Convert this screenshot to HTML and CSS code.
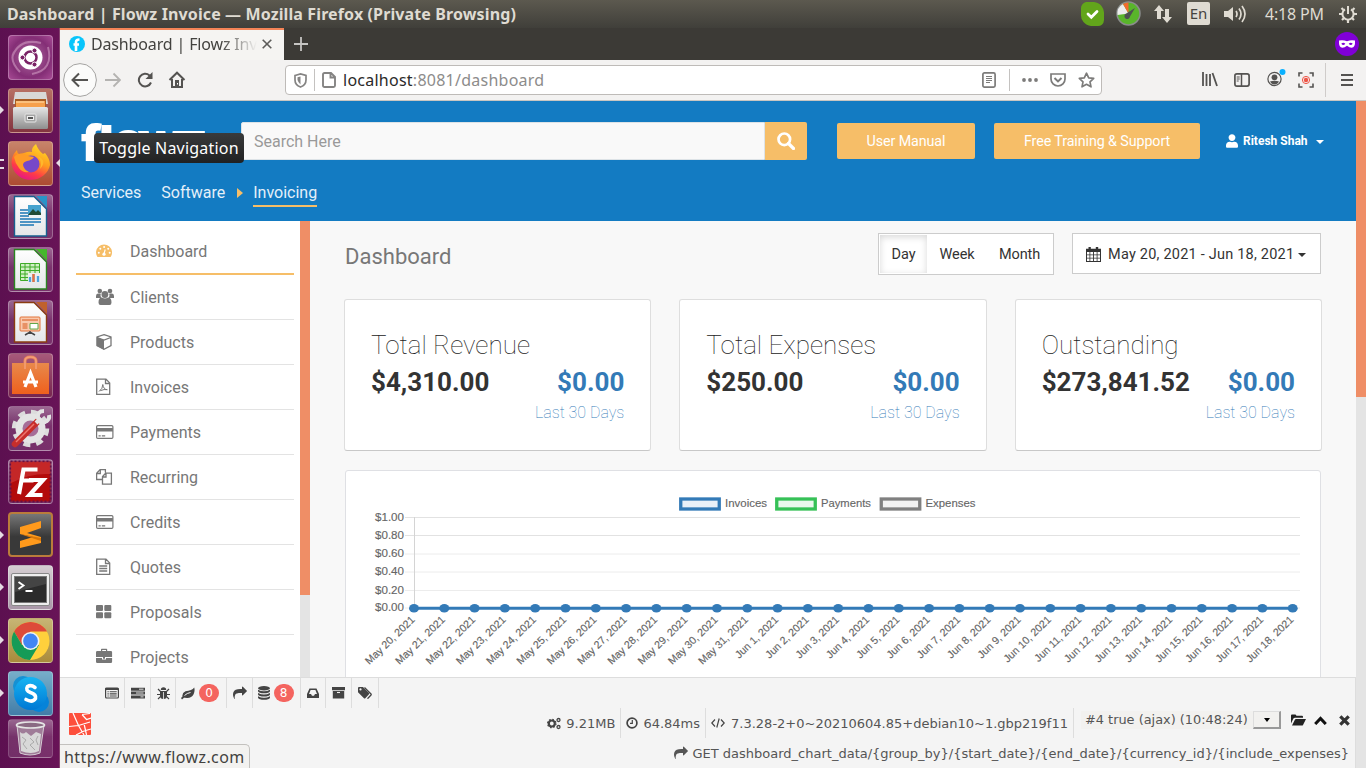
FILE: index.html
```html
<!DOCTYPE html>
<html lang="en">
<head>
<meta charset="utf-8">
<title>Dashboard | Flowz Invoice</title>
<link rel="stylesheet" href="styles.css">
</head>
<body>
<svg class="defs" width="0" height="0">
  <defs>
    <symbol id="i-share" viewBox="0 0 1792 1792"><path fill="currentColor" d="M1792 640q0 26-19 45l-512 512q-19 19-45 19t-45-19-19-45v-256h-224q-98 0-175.5 6t-154 21.5-133 42.5-105.5 69.5-80 101-48.5 138.5-17.5 181q0 55 5 123 0 6 2.5 23.5t2.5 26.5q0 15-8.5 25t-23.5 10q-16 0-28-17-7-9-13-22t-13.5-30-10.5-24q-127-285-127-451 0-199 53-333 162-403 875-403h224v-256q0-26 19-45t45-19 45 19l512 512q19 19 19 45z"/></symbol>
    <symbol id="i-card" viewBox="0 0 18 18"><rect x=".6" y="2.6" width="16.3" height="12.8" rx="1.2" fill="none" stroke="currentColor" stroke-width="1.2"/><path fill="currentColor" d="M.6 5h16.3v3.5H.6zM2.5 12.2h2.2v1.2H2.5zM5.8 12.2h3.4v1.2H5.8z"/></symbol>
    <linearGradient id="g-sheet" x1="0" y1="0" x2="0" y2="1"><stop offset="0" stop-color="#fff"/><stop offset="1" stop-color="#e4e6e8"/></linearGradient>
    <linearGradient id="g-fox" x1=".8" y1="0" x2=".3" y2="1"><stop offset="0" stop-color="#ffe226"/><stop offset=".45" stop-color="#ff9a1f"/><stop offset=".75" stop-color="#ff3b47"/><stop offset="1" stop-color="#e31587"/></linearGradient>
    <linearGradient id="g-metal" x1="0" y1="0" x2="0" y2="1"><stop offset="0" stop-color="#e6e6e6"/><stop offset="1" stop-color="#8e8e8e"/></linearGradient>
    <linearGradient id="g-bag" x1="0" y1="0" x2="0" y2="1"><stop offset="0" stop-color="#e8894b"/><stop offset="1" stop-color="#ef601d"/></linearGradient>
    <linearGradient id="g-sky" x1="0" y1="0" x2="0" y2="1"><stop offset="0" stop-color="#16b4f2"/><stop offset="1" stop-color="#0078d4"/></linearGradient>
  </defs>
</svg>

<div class="desktop">
  <header class="panel">
    <div class="panel-title">Dashboard | Flowz Invoice — Mozilla Firefox (Private Browsing)</div>
    <div class="panel-tray">
      <svg class="t-check" width="25" height="26" viewBox="0 0 25 26"><path fill="#62a51b" d="M6 1h8a11 11 0 0 1 10 12v6a6 6 0 0 1-7 6h-6A11 11 0 0 1 1 13V8a7 7 0 0 1 5-7z"/><path d="m8 13 3.300 3.200L17 10.500" fill="none" stroke="#fff" stroke-width="2.800" stroke-linecap="round"/></svg>
      <svg class="t-gauge" width="25" height="25" viewBox="0 0 25 25"><circle cx="12.500" cy="12.500" r="11.500" fill="#59b52b" stroke="#8a8d8c" stroke-width="1.500"/><path fill="#ececec" d="M12.500 12.500 1.500 14A11 11 0 0 1 7 3z"/><path fill="#f26a2e" d="M12.500 12.500 7 3a11 11 0 0 1 5.500-1.500z"/><path fill="#4c5250" d="M9.500 13 19 7l-5 8.500a2.800 2.800 0 1 1-4.500-2.500z"/></svg>
      <svg class="t-net" width="18" height="18" viewBox="0 0 18 18"><path fill="#dfdbd2" d="m5 0 5 6H7v8H3V6H0zM13 18l-5-6h3V4h4v8h3z"/></svg>
      <span class="t-lang">En</span>
      <svg class="t-vol" width="23" height="20" viewBox="0 0 23 20"><path fill="#dfdbd2" d="M0 7h4l5-4v14l-5-4H0z"/><path d="M12 7q2 3 0 6M15 4.500q4 5.500 0 11M18 2q6 8 0 16" fill="none" stroke="#dfdbd2" stroke-width="1.700"/></svg>
      <span class="t-time">4:18 PM</span>
      <svg class="t-gear" width="18" height="18" viewBox="0 0 18 18"><g fill="none" stroke="#dfdbd2"><path d="M6 4.300a5.600 5.600 0 1 0 6 0" stroke-width="2"/><path d="M9 1v8" stroke-width="2"/><path d="m2.500 3 2 2M15.500 3l-2 2M0 9h3.500M14.500 9H18M3 15l2-2M15 15l-2-2M9 14.500V18" stroke-width="2.200"/></g></svg>
    </div>
  </header>

  <div class="workspace">
    <aside class="launcher">
      <div class="tile dash"><svg viewBox="0 0 45 45"><path d="M5 20Q12 3 33 8M40 12q6 23-16 27M12 37Q1 26 6 17" fill="none" stroke="#c68bb8" stroke-width="2" opacity=".7"/><circle cx="22.500" cy="22.500" r="12" fill="#fff"/><circle cx="22.500" cy="22.500" r="6" fill="none" stroke="#7a2266" stroke-width="2.500"/><g fill="#7a2266" stroke="#fff"><circle cx="14.500" cy="22.500" r="2.500"/><circle cx="26.500" cy="15.500" r="2.500"/><circle cx="26.500" cy="29.500" r="2.500"/></g></svg></div>
      <div class="tile files run"><svg viewBox="0 0 45 45"><path fill="#d8d8d6" d="M7 4h31l2 12H5z"/><path fill="#a85c22" d="M7 11h31v8H7z"/><path fill="#f6a04c" d="M8 13h29v6H8z"/><path d="M8 14h28" stroke="#ffe0ad"/><rect x="5" y="19" width="35" height="22" rx="1.500" fill="url(#g-metal)"/><rect x="17" y="26" width="11" height="8" rx="1" fill="#a3a3a3" stroke="#e5e5e5"/><rect x="19.500" y="28.500" width="6" height="3" fill="#555" stroke="#eee"/></svg></div>
      <div class="tile fox run active"><svg viewBox="0 0 45 45"><path fill="url(#g-fox)" d="M28 3q2 6 7 10l2-1q5 6 5 12a19.500 18.500 0 0 1-38 1Q2 16 9 9q0 3 2 4l5-1q5-2 8-1-1-4 4-8z"/><circle cx="23" cy="23" r="8.500" fill="#7748c9"/><path fill="#ff9b26" d="M6 16q5-6 14-1l6 1q-2 3-7 4-4 1-4 4 1 5 6 7-7 1-10-4-4-5-5-11z"/><path fill="#ffb82b" d="M29 15q6 5 3 13 8-9-3-13z"/></svg></div>
      <div class="tile doc"><svg viewBox="0 0 45 45"><path fill="url(#g-sheet)" stroke="#17608f" stroke-width="1.400" d="M6.500 2.500H26L38.500 15v27h-32z"/><path fill="#2a93c8" d="M28 2h11v12z"/><path d="M12 16h9M12 19h9M12 22h9M12 25h21M12 28h21M12 31h14" stroke="#1a77b5" stroke-width="1.500"/><rect x="20" y="11" width="13" height="10" fill="#46a3cf"/><path fill="#234b34" d="m20 21 5-6 3 3 2-2 3 3v2z"/></svg></div>
      <div class="tile doc"><svg viewBox="0 0 45 45"><path fill="url(#g-sheet)" stroke="#2a8520" stroke-width="1.400" d="M6.500 2.500H26L38.500 15v27h-32z"/><path fill="#45b82c" d="M28 2h11v12z"/><path fill="#d1f0c6" stroke="#3eab28" d="M12.500 16.500h19v17h-19zM12.500 20h19M12.500 23.500h19M12.500 27h19M12.500 30.500h19M17 16.500v17M22 16.500v17M27 16.500v17"/><rect x="20" y="26" width="13" height="9" fill="#eee"/><path d="M22 35v-5M25.500 35v-8M30 35v-6" stroke="#4da2dc" stroke-width="2.300"/><path d="M25.500 35v-8" stroke="#ef713b" stroke-width="2.300"/></svg></div>
      <div class="tile doc"><svg viewBox="0 0 45 45"><path fill="url(#g-sheet)" stroke="#8a3d10" stroke-width="1.400" d="M6.500 2.500H26L38.500 15v27h-32z"/><path fill="#c0612c" d="M28 2h11v12z"/><rect x="12" y="17" width="20" height="14" rx="1" fill="#f9c9ad" stroke="#e3753a"/><path d="M14 20h16M14.500 24h5M14.500 26h5M14.500 28h5" stroke="#d75a1e"/><path fill="#fff" stroke="#63a84a" d="M22 23.500h8V29h-8z"/><path d="m17 35 5-3 5 3M22 31v3" fill="none" stroke="#444" stroke-width="1.500"/></svg></div>
      <div class="tile bag"><svg viewBox="0 0 45 45"><path d="M17 16V8q0-4 5.500-4T28 8v8" fill="none" stroke="#e9815a" stroke-width="3"/><path fill="url(#g-bag)" d="M4 10h37v31H4z"/><path d="M17 16V8q0-4 5.500-4T28 8v8" fill="none" stroke="#f3a078" stroke-width="1.500"/><path d="m17 34 5.500-14L28 34M15 29h15" fill="none" stroke="#fff" stroke-width="3.200"/></svg></div>
      <div class="tile tools"><svg viewBox="0 0 45 45"><circle cx="22.500" cy="22.500" r="16.500" fill="none" stroke="#dcdcdc" stroke-width="4.500" stroke-dasharray="7 5.960"/><circle cx="22.500" cy="22.500" r="11.500" fill="#a66d97" stroke="#e4e4e4" stroke-width="7"/><path d="M7 38 29 16" stroke="#c72e2b" stroke-width="6.500" stroke-linecap="round"/><path d="m8 36 18-18" stroke="#ee7770" stroke-width="1.500"/><path d="m28 17 5-5M36 5q-7 0-6 7 1 6 7 4 5-2 4-7" fill="none" stroke="#e4e4e4" stroke-width="4"/></svg></div>
      <div class="tile fz"><svg viewBox="0 0 45 45"><rect x="2.500" y="2.500" width="40" height="40" fill="#b30b0b" stroke="#651044" stroke-width="2" stroke-dasharray="2 2"/><path fill="#cf3a3a" opacity=".6" d="M3 3h39v12Q22 14 3 24z"/><path d="M11 35 15.500 10.500h14M13.500 21.500h12M21 21h14L21.500 36h13" fill="none" stroke="#fff" stroke-width="4.200"/></svg></div>
      <div class="tile sublime run"><svg viewBox="0 0 45 45"><path fill="#ff9a1c" d="m12 15 21-6v7l-14 5 14 4v6l-21 5v-7l13-4-13-3z"/><path fill="#d97708" d="m12 22 21 4v3l-12-4z"/></svg></div>
      <div class="tile term run"><svg viewBox="0 0 45 45"><rect x="3.500" y="8.500" width="38" height="32" rx="1.500" fill="#eee" stroke="#888"/><rect x="6.500" y="11.500" width="32" height="26" fill="#2b2b2b" stroke="#777"/><path fill="#555" opacity=".6" d="M7 12h31v7L7 27z"/><path d="m10.500 17 5 3.500-5 3.500M17.500 26h7" fill="none" stroke="#fff" stroke-width="1.900"/></svg></div>
      <div class="tile chrome run"><svg viewBox="0 0 45 45"><circle cx="22.500" cy="23" r="19" fill="#ffd03c"/><path fill="#dd4b39" d="M6.100 13.500A19 19 0 0 1 39 13.500H22.500L14 27z"/><path fill="#159b57" d="M6.100 13.500A19 19 0 0 0 22 42l9-15H14z"/><circle cx="22.500" cy="23" r="9" fill="#f1f1f1"/><circle cx="22.500" cy="23" r="7.400" fill="#4285f4"/></svg></div>
      <div class="tile skype run"><svg viewBox="0 0 45 45"><circle cx="15" cy="15" r="10" fill="#1591d4"/><circle cx="31" cy="31" r="10" fill="#0583d9"/><circle cx="22.500" cy="22.500" r="16.500" fill="url(#g-sky)"/><path d="M27 16.500q-4-3-7.500-1-2.500 4 3 6 6 2 5 6-3 4.500-9.500 1" fill="none" stroke="#fff" stroke-width="3.600" stroke-linecap="round"/></svg></div>
      <div class="tile trash"><svg viewBox="0 0 45 40"><path d="m9 6 3 28q10 4 20 0L36 6" fill="#9f7c98" stroke="#d6ccd4" stroke-width="1"/><path d="M12 13q3 3 6 0l5 4 5-4 5 2-2 17q-8 4-18 0z" fill="#d8d8d8"/><path d="m14 18 4 3-3 4 4 5M22 19l4 4-4 3 5 5M30 17l-2 4 2 5" fill="none" stroke="#aaa"/><ellipse cx="22.500" cy="6" rx="14" ry="3" fill="#8a6a83" stroke="#e6e6e6" stroke-width="1.600"/></svg></div>
    </aside>

    <main class="browser">
      <div class="tabs">
        <div class="tab">
          <svg width="16" height="16" viewBox="0 0 16 16"><circle cx="8" cy="8" r="8" fill="#09c5fb"/><path d="M7 15V6q0-2.500 3.500-2.500M4.500 8.500H10" fill="none" stroke="#fff" stroke-width="2.600"/></svg>
          <span class="tab-title">Dashboard | Flowz Inv</span>
          <svg width="10" height="10" viewBox="0 0 10 10"><path d="m.7.7 8.600 8.600M9.300.7.700 9.300" stroke="#5c5b59" stroke-width="1.600"/></svg>
        </div>
        <svg class="tab-new" width="14" height="14" viewBox="0 0 14 14"><path d="M7 0v14M0 7h14" stroke="#c6c5c3" stroke-width="1.800"/></svg>
        <svg class="tab-mask" width="24" height="24" viewBox="0 0 24 24"><circle cx="12" cy="12" r="12" fill="#8000d7"/><path fill="#fff" fill-rule="evenodd" d="M4 8.500q4-1 8 .7 4-1.700 8-.7.500 7-3.500 7.200-2 0-4.500-2-2.500 2-4.500 2Q3.500 15.500 4 8.500zm2.300 3.200q2 2.400 4 0-2-1.700-4 0zm7.400 0q2 2.400 4 0-2-1.700-4 0z"/></svg>
      </div>

      <div class="toolbar">
        <svg class="nav-back" width="34" height="34" viewBox="0 0 34 34"><circle cx="17" cy="17" r="16.400" fill="#fbfbfa" stroke="#a4a3a1" stroke-width="1"/><path d="M25 17H10M16 10.500 9.500 17l6.500 6.500" fill="none" stroke="#545351" stroke-width="2"/></svg>
        <svg class="nav-fwd" width="16" height="16" viewBox="0 0 16 16"><path d="M0 8h15M8.500 1.500 15 8l-6.500 6.500" fill="none" stroke="#b4b3b1" stroke-width="1.800"/></svg>
        <svg class="nav-reload" width="16" height="16" viewBox="0 0 16 16"><path d="M14 10.500A6.300 6.300 0 1 1 12.500 3.500L14.500 6" fill="none" stroke="#545351" stroke-width="2"/><path fill="#545351" d="M15.500 0v7h-7z"/></svg>
        <svg class="nav-home" width="18" height="17" viewBox="0 0 18 17"><path d="M1.500 9 9 1.700 16.500 9M4 8v8h10V8" fill="none" stroke="#545351" stroke-width="2"/><path fill="#545351" d="M7 9h4v7H7z"/><path d="M9.500 12v1.500" stroke="#fff"/></svg>
        <div class="urlbar">
          <svg width="13" height="15" viewBox="0 0 13 15"><path d="M1 2.500 6.500 1 12 2.500V7q0 5-5.500 7Q1 12 1 7z" fill="none" stroke="#858483" stroke-width="1.700"/><path fill="#858483" d="M6.500 3.500v8Q4 9 3.500 7V4.300z"/></svg>
          <i class="url-sep"></i>
          <svg width="14" height="16" viewBox="0 0 14 16"><path d="M2.500 1H9l4 4v8.500q0 1.500-1.500 1.500h-9Q1 15 1 13.500v-11Q1 1 2.500 1zM8.500 1v4.500H13" fill="none" stroke="#858483" stroke-width="1.900"/></svg>
          <span class="url"><b>localhost</b>:8081/dashboard</span>
          <svg class="u-read" width="14" height="16" viewBox="0 0 14 16"><rect x=".9" y=".9" width="12.200" height="14.200" rx="1.500" fill="none" stroke="#7c7b7a" stroke-width="1.700"/><path d="M4 4.500h6M4 6.500h6M4 8.500h6M4 10.500h4" stroke="#7c7b7a" stroke-width="1"/></svg>
          <i class="url-sep u-sep2"></i>
          <svg class="u-dots" width="16" height="4" viewBox="0 0 16 4"><g fill="#7c7b7a"><circle cx="2" cy="2" r="1.900"/><circle cx="8" cy="2" r="1.900"/><circle cx="14" cy="2" r="1.900"/></g></svg>
          <svg class="u-pocket" width="16" height="14" viewBox="0 0 16 14"><path d="M1 1h14v5a7 7 0 0 1-14 0z" fill="none" stroke="#7c7b7a" stroke-width="1.700"/><path d="m4.500 5 3.500 3.400L11.500 5" fill="none" stroke="#7c7b7a" stroke-width="2"/></svg>
          <svg width="17" height="16" viewBox="0 0 17 16"><path d="m8.500 1.200 2.200 4.600 5 .6-3.700 3.400 1 5-4.500-2.500L4 14.800l1-5-3.700-3.400 5-.6z" fill="none" stroke="#7c7b7a" stroke-width="1.700" stroke-linejoin="round"/></svg>
        </div>
        <svg class="n-lib" width="16" height="15" viewBox="0 0 16 15"><path d="M1 0v14M4.500 2v12M8 2v12" stroke="#545351" stroke-width="1.800"/><path d="m10.500 1 4.500 13" stroke="#545351" stroke-width="1.800"/></svg>
        <svg class="n-side" width="16" height="14" viewBox="0 0 16 14"><rect x=".9" y=".9" width="14.200" height="12.200" rx="2" fill="none" stroke="#545351" stroke-width="1.700"/><path d="M7.500 1v12" stroke="#545351" stroke-width="1.500"/><path d="M2.700 4h3M2.700 6h3M2.700 8h2" stroke="#545351"/></svg>
        <svg class="n-acct" width="19" height="18" viewBox="0 0 19 18"><circle cx="7.500" cy="10" r="6.600" fill="none" stroke="#545351" stroke-width="1.200"/><circle cx="7.500" cy="8.300" r="2.900" fill="#545351"/><path fill="#545351" d="M3 12.500q2-.8 4.500-.8t4.500.8q-1.500 3-4.500 3t-4.500-3z"/><circle cx="15.500" cy="3" r="3" fill="#0ab1ff"/></svg>
        <svg class="n-shot" width="16" height="16" viewBox="0 0 16 16"><path d="M1 4.500V1h3.500M11.500 1H15v3.500M15 11.500V15h-3.500M4.500 15H1v-3.500" fill="none" stroke="#545351" stroke-width="1.600"/><circle cx="8" cy="8" r="3.600" fill="none" stroke="#ee5547" stroke-width="1"/><circle cx="8" cy="8" r="2.200" fill="#ee5547"/></svg>
        <i class="bar-sep"></i>
        <svg class="n-menu" width="12" height="12" viewBox="0 0 12 12"><path d="M0 1h12M0 6h12M0 11h12" stroke="#545351" stroke-width="2"/></svg>
      </div>

      <div class="page">
        <div class="page-main">
          <div class="site-head">
            <div class="head-row">
              <div class="logo"><span>fl</span><span class="logo-low">owz</span></div>
              <div class="search"><span class="search-box">Search Here</span><span class="search-btn"><svg width="18" height="18" viewBox="0 0 18 18"><circle cx="7.300" cy="7.300" r="5.800" fill="none" stroke="#fff" stroke-width="2.700"/><path d="m11.500 11.500 5 5" stroke="#fff" stroke-width="3.200" stroke-linecap="round"/></svg></span></div>
              <a class="btn btn-manual">User Manual</a>
              <a class="btn btn-train">Free Training &amp; Support</a>
              <div class="user"><svg width="12" height="14" viewBox="0 0 448 512"><path fill="#fff" d="M224 256c70.700 0 128-57.300 128-128S294.700 0 224 0 96 57.300 96 128s57.300 128 128 128zm89.600 32h-16.700c-22.200 10.200-46.900 16-72.900 16s-50.600-5.800-72.900-16h-16.700C60.200 288 0 348.200 0 422.400V464c0 26.500 21.500 48 48 48h352c26.500 0 48-21.500 48-48v-41.600c0-74.200-60.200-134.400-134.400-134.400z"/></svg><span>Ritesh Shah</span><i class="caret"></i></div>
            </div>
            <nav class="crumbs"><a>Services</a><a>Software</a><i class="crumb-arrow"></i><a class="current">Invoicing</a></nav>
            <div class="tooltip">Toggle Navigation</div>
          </div>

          <div class="columns">
            <nav class="side">
              <a class="on"><svg viewBox="0 0 18 18"><path fill="currentColor" d="M1.500 15A8 8 0 1 1 14.600 15z"/><g fill="#fff"><circle cx="2.800" cy="10.700" r="1"/><circle cx="4.300" cy="6.800" r="1"/><circle cx="8.100" cy="5" r="1"/><circle cx="12.200" cy="6.800" r="1"/><circle cx="13.700" cy="10.700" r="1"/><circle cx="8" cy="12.200" r="1.600"/></g><path d="m8 12 1.200-4.500" stroke="#fff" stroke-width="1.100"/></svg>Dashboard</a>
              <a><svg viewBox="0 0 18 18"><g fill="currentColor"><circle cx="3.800" cy="3" r="2.300"/><circle cx="14" cy="3" r="2.300"/><path d="M0 10V8q0-2.500 2-2.500h2.500q.5 1 0 2 .3 1.500 1 2.500zM18 10V8q0-2.500-2-2.500h-2.500q-.5 1 0 2-.3 1.500-1 2.500z"/><circle cx="8.900" cy="6.500" r="3.400"/><path d="M2.500 14.500q0-5 3.500-5 3 2 6 0 3.500 0 3.500 5 0 2.500-2 2.500h-9q-2 0-2-2.500z"/></g></svg>Clients</a>
              <a><svg viewBox="0 0 18 18"><path d="M8 1.700 15 4v8.500l-7 3.800-7-3.800V4zM1.200 4.500 8 7l6.800-2.500" fill="none" stroke="currentColor" stroke-width="1.300"/><path fill="currentColor" d="M.7 4.300 8 7v9.800l-7.300-4z"/></svg>Products</a>
              <a><svg viewBox="0 0 18 18"><path d="M.7 1.200H10l3.700 3.700v11.400H.7zM9.500 1.500v4h4" fill="none" stroke="currentColor" stroke-width="1.300"/><path d="M3 13.500q4-3 3.800-7 .7 5 4.500 5.200-3-.8-7 1" fill="none" stroke="currentColor" stroke-width="1"/></svg>Invoices</a>
              <a><svg><use href="#i-card"/></svg>Payments</a>
              <a><svg viewBox="0 0 18 18"><path fill="none" stroke="currentColor" stroke-width="1.300" d="M6.500 11.500H.6V5.300l3.500-3.700h5.300v3M4.300 2v3.500H.8M9.700 5.200h5.700v11H6.500V8.500zM10 5.500V9H6.700"/></svg>Recurring</a>
              <a><svg><use href="#i-card"/></svg>Credits</a>
              <a><svg viewBox="0 0 18 18"><path d="M.7 1.200H10l3.700 3.700v11.400H.7zM9.500 1.500v4h4M3.200 8h8M3.200 10.500h8M3.200 13h8" fill="none" stroke="currentColor" stroke-width="1.300"/></svg>Quotes</a>
              <a><svg viewBox="0 0 18 18"><g fill="currentColor"><rect y="2" width="7" height="6" rx="1"/><rect x="8.300" y="2" width="7" height="6" rx="1"/><rect y="9.200" width="7" height="6" rx="1"/><rect x="8.300" y="9.200" width="7" height="6" rx="1"/></g></svg>Proposals</a>
              <a><svg viewBox="0 0 18 18"><path fill="currentColor" d="M5 3V1.500Q5 .8 5.700.8h4.800q.7 0 .7.700V3h3.600q1.300 0 1.300 1.300V9H0V4.300Q0 3 1.300 3zm1.200 0H10V2H6.200zM0 10h6v1.500h4V10h6.100v3.700q0 1.300-1.300 1.300H1.300Q0 15 0 13.700zM7 9h2v1.700H7z"/></svg>Projects</a>
            </nav>
            <div class="scroll side-scroll"><i></i></div>

            <section class="content">
              <div class="content-head">
                <h1>Dashboard</h1>
                <div class="group"><span class="pressed">Day</span><span class="week">Week</span><span class="month">Month</span></div>
                <div class="range"><svg width="15" height="15" viewBox="0 0 15 15"><path fill="#333" d="M2.500 0h2.300v1.800h5V0h2.400v1.800H15V15H0V1.800h2.500z"/><path fill="#fff" d="M1 5h2.500v2.400H1zM4.300 5h2.800v2.400H4.300zM8 5h2.700v2.400H8zM11.500 5H14v2.400h-2.500zM1 8.200h2.500v2.500H1zM4.300 8.200h2.800v2.500H4.300zM8 8.200h2.700v2.500H8zM11.500 8.200H14v2.500h-2.500zM1 11.500h2.500V14H1zM4.300 11.500h2.800V14H4.300zM8 11.500h2.700V14H8zM11.500 11.500H14V14h-2.500z"/></svg><span>May 20, 2021 - Jun 18, 2021</span><i class="caret dark"></i></div>
              </div>
              <div class="cards">
                <article><h2>Total Revenue</h2><div class="nums"><b>$4,310.00</b><b class="blue">$0.00</b></div><p>Last 30 Days</p></article>
                <article><h2>Total Expenses</h2><div class="nums"><b>$250.00</b><b class="blue">$0.00</b></div><p>Last 30 Days</p></article>
                <article><h2>Outstanding</h2><div class="nums"><b>$273,841.52</b><b class="blue">$0.00</b></div><p>Last 30 Days</p></article>
              </div>
              <div class="chart-card"><svg id="chart" width="974" height="206" viewBox="346 471 974 206"></svg></div>
            </section>
          </div>

          <div class="debugbar">
            <div class="db-tabs">
              <span class="d1"><svg width="14" height="14" viewBox="0 0 14 14"><rect x=".6" y="2" width="12.800" height="10" rx="1" fill="none" stroke="#444" stroke-width="1.200"/><path fill="#444" d="M.6 2h12.800v2H.6z"/><path d="M2.500 5.800h1.200M4.700 5.800h7M2.500 7.900h1.200M4.700 7.900h7M2.500 10h1.200M4.700 10h7" stroke="#444" stroke-width="1.100"/></svg></span>
              <span class="d2"><svg width="14" height="14" viewBox="0 0 14 14"><path d="M0 3.200h14M0 7h14M0 10.900h14" stroke="#444" stroke-width="3"/><path d="M8 3.200h4.500M5 7h7.500M9.500 10.900h3" stroke="#ddd" stroke-width="1"/></svg></span>
              <span class="d3"><svg width="13" height="13" viewBox="0 0 13 13"><path fill="#444" d="M3.800 3a2.700 2.700 0 0 1 5.400 0zM3 4h7v4.500q0 3.500-3.500 3.500T3 8.500z"/><path d="m1 2 2.500 2.500M12 2 9.500 4.500M0 7.500h3M10 7.500h3M1 12l2.700-2.700M12 12 9.300 9.300" stroke="#444" stroke-width="1.200"/><path d="M6.500 5v7" stroke="#f4f4f4" stroke-width=".8"/></svg></span>
              <span class="d4"><svg width="14" height="13" viewBox="0 0 14 13"><path fill="#444" d="M13.200.5q1 3-.6 6.700-2.200 4-6.600 3.800-2-.4-3-.2L1 12.500 0 11l1.500-1.500Q.8 6 4.500 4.200 11 3.600 13.200.5z"/><path d="M3.500 8.500Q6 6 9.500 5.500" fill="none" stroke="#f4f4f4"/></svg><em>0</em></span>
              <span class="d5"><svg width="14" height="14"><use href="#i-share"/></svg></span>
              <span class="d6"><svg width="12" height="14" viewBox="0 0 12 14"><g fill="#444"><ellipse cx="6" cy="2.300" rx="6" ry="2.200"/><path d="M0 3.800q6 3 12 0v1.500q-1 2-6 2t-6-2zM0 7q6 3 12 0v1.500q-1 2-6 2t-6-2zM0 10.200q6 3 12 0v1.500q-1 2-6 2t-6-2z"/></g></svg><em>8</em></span>
              <span class="d7"><svg width="12" height="12" viewBox="0 0 12 12"><path fill="#444" fill-rule="evenodd" d="M2.500 1.500h7L12 7v4H0V7zM3.600 3 2 7h2l1 1.700h2L8 7h2L8.400 3z"/></svg></span>
              <span class="d8"><svg width="13" height="12" viewBox="0 0 13 12"><path fill="#444" d="M0 0h13v3.300H0zM.8 4h11.400v7.500H.8z"/><path d="M5 5.500h3" stroke="#f4f4f4" stroke-width="1.100"/></svg></span>
              <span class="d9"><svg width="14" height="12" viewBox="0 0 14 12"><path fill="#444" d="M0 1q0-1 1-1h4l6 6q.6.700 0 1.300l-3.700 4q-.7.500-1.300 0L0 5.200z"/><path d="M6.500.5 13 7q.4.500 0 1l-3.500 3.700" fill="none" stroke="#444" stroke-width="1.300"/><circle cx="2.500" cy="2.400" r="1.100" fill="#f4f4f4"/></svg></span>
            </div>
            <div class="db-row">
              <svg class="laravel" width="22" height="22" viewBox="0 0 22 22"><rect width="22" height="22" rx="1" fill="#fd4f3c"/><path d="M4 0l5.500 12.500L15 22M0 13.500l9.500-1L21 9M13 1.500l8-1M13 1.500l4.500 5L22 5M17.500 22 15 10.500M7 22l8-4 7-2" fill="none" stroke="#fff" stroke-width="1.200"/></svg>
              <div class="stats">
                <span class="s1"><svg width="14" height="13" viewBox="0 0 14 13"><circle cx="4.800" cy="6.500" r="3" fill="none" stroke="#444" stroke-width="2.200"/><circle cx="4.800" cy="6.500" r="4.200" fill="none" stroke="#444" stroke-width="1.200" stroke-dasharray="1.600 1.700"/><g fill="none" stroke="#444" stroke-width="1.300"><circle cx="11.500" cy="3" r="1.500"/><circle cx="11.500" cy="10" r="1.500"/></g></svg>9.21MB</span>
                <span class="s2"><svg width="12" height="12" viewBox="0 0 12 12"><circle cx="6" cy="6" r="4.900" fill="none" stroke="#444" stroke-width="1.700"/><path d="M6.300 3v3.300H4" fill="none" stroke="#444" stroke-width="1.200"/></svg>64.84ms</span>
                <span class="s3"><svg width="14" height="10" viewBox="0 0 14 10"><path d="M4 1.500.8 5 4 8.500M10 1.500 13.200 5 10 8.500M8.200.5l-2.400 9" fill="none" stroke="#444" stroke-width="1.200"/></svg>7.3.28-2+0~20210604.85+debian10~1.gbp219f11</span>
                <div class="picker"><span>#4 true (ajax) (10:48:24)</span><i><b></b></i></div>
                <svg class="p-folder" width="15" height="12" viewBox="0 0 15 12"><path fill="#222" d="M0 9.500V1.500Q0 .5 1 .5h3.500l1 1.300h5.500q1 0 1 1v1H4q-1 0-1.600.8zM1 11.500 4 5.600q.3-.6 1-.6h10l-3 6q-.3.500-1 .5z"/></svg>
                <svg class="p-up" width="13" height="9" viewBox="0 0 13 9"><path d="m1.200 8 5.300-5.500L11.800 8" fill="none" stroke="#111" stroke-width="3"/></svg>
                <svg class="p-x" width="11" height="11" viewBox="0 0 11 11"><path d="m1.300 1.300 8.400 8.400M9.700 1.300 1.300 9.700" stroke="#333" stroke-width="3.200"/></svg>
              </div>
            </div>
            <div class="db-route"><svg width="14" height="14"><use href="#i-share"/></svg>GET dashboard_chart_data/{group_by}/{start_date}/{end_date}/{currency_id}/{include_expenses}</div>
          </div>
          <div class="status">https://www.flowz.com</div>
        </div>
        <div class="scroll page-scroll"><i></i></div>
      </div>
    </main>
  </div>
</div>
<script src="chart.js"></script>
</body>
</html>
```
FILE: styles.css
```css
* { box-sizing: border-box; }
body { margin: 0; overflow: hidden; font-family: Roboto, "Liberation Sans", sans-serif; color: #333; }
svg { display: block; flex: none; }
i, em { font-style: normal; }
.defs { position: absolute; }
.desktop { width: 1366px; height: 768px; display: flex; flex-direction: column; overflow: hidden; }

/* top panel */
.panel { height: 28px; flex: none; display: flex; align-items: center; justify-content: space-between; padding: 0 9px 1px 7px; background: linear-gradient(#5c594f, #403f3a); color: #dfdbd2; font-family: "Noto Sans", sans-serif; white-space: nowrap; }
.panel-title { font-weight: 700; font-size: 16px; line-height: 26px; letter-spacing: .12px; }
.panel-tray { display: flex; align-items: center; }
.t-check { margin-right: 1px; }
.t-gauge { margin-left: 10px; }
.t-net { margin-left: 13px; }
.t-lang { width: 23px; height: 23px; margin-left: 15px; border-radius: 2px; background: #dfdbd2; color: #45433f; font-size: 15px; line-height: 23px; text-align: center; }
.t-vol { margin-left: 14px; }
.t-time { width: 60px; margin-left: 18px; font-size: 16px; letter-spacing: -.2px; }
.t-gear { margin-left: 14px; }

.workspace { flex: 1; display: flex; min-height: 0; }

/* launcher */
.launcher { width: 60px; flex: none; padding: 7px 7px 0 8px; background: linear-gradient(90deg, #5c1050, #681357); border-right: 1px solid #85456f; display: flex; flex-direction: column; gap: 8px; }
.tile { width: 45px; height: 45px; flex: none; position: relative; border-radius: 4px; border: 1px solid rgba(255,255,255,.27); background: linear-gradient(rgba(255,255,255,.36), rgba(255,255,255,.14) 45%, rgba(255,255,255,.13)); }
.tile svg { width: 45px; height: 45px; margin: -1px; }
.tile.dash { background: radial-gradient(#b06ba2, #842e76 65%, #a74a94); }
.tile.files { background: linear-gradient(#b77063, #833440); }
.tile.fox { background: linear-gradient(#c7846a, #ad4b32); }
.tile.bag { background: linear-gradient(#a7597a, #76254f); }
.tile.sublime { background: linear-gradient(#777, #393939 55%); border: 2px solid #ba7c3b; }
.tile.sublime svg { margin: -2px; }
.tile.term { background: linear-gradient(#d5ced2, #a997a8); }
.tile.chrome { background: linear-gradient(#c7b574, #a98b3c); }
.tile.skype { background: linear-gradient(#77aec9, #427da8); }
.tile.trash { margin-top: -5px; height: 39px; border-color: rgba(255,255,255,.15); }
.tile.trash svg { height: 40px; }
.run::before { content: ""; position: absolute; left: -9px; top: 17px; border: 4px solid transparent; border-left-color: #e5dce3; border-right: 0; }
.sublime::before { left: -10px; }
.active::after { content: ""; position: absolute; right: -8px; top: 17px; border: 4px solid transparent; border-right-color: #e5dce3; border-left: 0; }
.fox::before { width: 4px; height: 6px; border: solid #e5dce3; border-width: 2px 0; }

/* browser chrome */
.browser { flex: 1; min-width: 0; display: flex; flex-direction: column; font-family: "Noto Sans", sans-serif; }
.tabs { height: 32px; flex: none; display: flex; align-items: center; background: #3c3a36; }
.tab { width: 224px; height: 32px; display: flex; align-items: center; padding: 0 12px 2px 9px; border-top: 2px solid #f58457; background: #f5f4f2; }
.tab-title { width: 166px; margin: 0 5px 0 6px; overflow: hidden; white-space: nowrap; font-size: 16px; letter-spacing: -.15px; line-height: 26px; color: #43423f; -webkit-mask-image: linear-gradient(90deg, #000 130px, transparent 166px); mask-image: linear-gradient(90deg, #000 130px, transparent 166px); }
.tab-new { margin: -1px 0 0 10px; }
.tab-mask { margin: 0 7px 0 auto; }
.toolbar { height: 41px; flex: none; display: flex; align-items: center; padding: 0 13px 1px 3px; background: #f3f2f1; border-bottom: 1px solid #c9c6c2; }
.nav-fwd { margin-left: 8px; }
.nav-reload { margin-left: 16px; }
.nav-home { margin-left: 15px; }
.urlbar { width: 818px; height: 30px; margin: 1px 0 0 99px; display: flex; align-items: center; padding: 0 6px 0 8px; border: 1px solid #bebbb8; border-radius: 4px; background: #fff; }
.url-sep { width: 1px; height: 22px; background: #c4c2c0; margin: 0 7px; }
.url { margin-left: 7px; font-size: 16px; letter-spacing: .25px; color: #8d8c8b; }
.url b { font-weight: 400; color: #2b2a29; }
.u-read { margin-left: auto; }
.u-sep2 { margin: 0 12px 0 13px; }
.u-pocket { margin: 0 12px; }
.n-lib { margin-left: 100px; }
.n-side { margin-left: 16px; }
.n-acct { margin: -4px 0 0 17px; }
.n-shot { margin-left: 12px; }
.bar-sep { width: 1px; height: 34px; margin-left: 11px; background: #cfccca; }
.n-menu { margin-left: 15px; }

/* page */
.page { flex: 1; min-height: 0; display: flex; font-family: Roboto, sans-serif; }
.page-main { position: relative; width: 1296px; display: flex; flex-direction: column; overflow: hidden; background: #f8f8f8; }
.scroll { width: 10px; flex: none; background: #e4e4e4; }
.scroll i { display: block; background: #ef8e66; }
.page-scroll i { height: 296px; }
.side-scroll i { height: 374px; }

.site-head { position: relative; height: 120px; flex: none; padding: 21px 0 0 21px; background: #137bc2; color: #fff; }
.head-row { display: flex; align-items: center; height: 38px; }
.logo { width: 160px; height: 38px; display: flex; font: 900 50px/42px Inter, sans-serif; letter-spacing: -3px; }
.logo-low { margin-left: 1px; font-size: 52px; letter-spacing: -6px; line-height: 37px; }
.search { display: flex; height: 38px; }
.search-box { width: 524px; padding-left: 12px; border: 1px solid #dde3e7; border-radius: 2px 0 0 2px; background: #f9f9f9; color: #999; font-size: 16px; line-height: 37px; }
.search-btn { width: 42px; display: grid; place-items: center; border-radius: 0 2px 2px 0; background: #f6be68; }
.btn { height: 36px; border-radius: 2px; background: #f6be68; font-size: 14.300px; line-height: 37px; text-align: center; letter-spacing: -.1px; }
.btn-manual { width: 138px; margin-left: 30px; }
.btn-train { width: 206px; margin-left: 19px; }
.user { display: flex; align-items: center; margin-left: 26px; font-size: 12px; font-weight: 700; }
.user span { margin-left: 5px; }
.caret { border: 4px solid transparent; border-top-color: #fff; border-bottom: 0; margin: 2px 0 0 8px; }
.caret.dark { border-top-color: #333; margin-left: 4px; }
.crumbs { display: flex; height: 48px; font-size: 16px; line-height: 22px; padding-top: 22px; color: #e4f0f9; }
.crumbs a { height: 25px; }
.crumbs a + a { margin-left: 20px; }
.crumb-arrow { height: 10px; margin: 6px 10px 0 12px; border: 5px solid transparent; border-left: 6px solid #f6be68; border-right: 0; }
.crumbs .current { border-bottom: 2px solid #f6be68; }
.tooltip { position: absolute; left: 34px; top: 32px; width: 150px; height: 30px; border-radius: 4px; background: linear-gradient(#393a3b, #202122); color: #fff; font: 16px/30px "Noto Sans", sans-serif; text-align: center; letter-spacing: .2px; white-space: nowrap; }

.columns { flex: 1; min-height: 0; display: flex; }
.side { width: 240px; flex: none; padding: 8px 6px 0 16px; background: #fff; overflow: hidden; }
.side a { height: 45px; display: flex; align-items: center; gap: 16px; padding-left: 20px; border-bottom: 1px solid #e3e3e3; color: #777; font-size: 16px; }
.side svg { width: 18px; height: 18px; }
.side .on { height: 46px; border-bottom: 2px solid #f6be68; }
.side .on svg { color: #f6be68; }

.content { flex: 1; padding: 12px 34px 0 34px; overflow: hidden; }
.content-head { display: flex; height: 42px; align-items: flex-start; padding-right: 1px; }
h1 { margin: 0 auto 0 1px; font-size: 22px; font-weight: 400; line-height: 48px; color: #777; }
.group { display: flex; width: 176px; height: 42px; padding: 1px; border: 1px solid #ccc; background: #fff; font-size: 14.500px; line-height: 40px; letter-spacing: -.1px; }
.group span { text-align: center; }
.pressed { width: 47px; height: 38px; box-shadow: inset 0 2px 7px rgba(0,0,0,.16); }
.week { width: 60px; }
.month { width: 65px; }
.range { display: flex; align-items: center; width: 249px; height: 41px; margin-left: 18px; padding: 1px 0 0 13px; border: 1px solid #ccc; background: #fff; font-size: 14.500px; }
.range span { margin-left: 7px; letter-spacing: .22px; white-space: nowrap; }
.cards { display: flex; gap: 28px; margin-top: 24px; }
.cards article { flex: 1; height: 152px; padding: 27px 26px 0; border: 1px solid #dedede; border-bottom-color: #c8c8c8; border-radius: 3px; background: #fff; }
h2 { margin: 0; font-size: 26px; line-height: 37px; font-weight: 100; color: #222; }
.nums { display: flex; justify-content: space-between; font-size: 26px; line-height: 36px; }
.blue { color: #337ab7; }
.cards p { margin: 0; text-align: right; font-size: 16px; font-weight: 100; line-height: 25px; color: #337ab7; }
.chart-card { margin: 19px 1px 0; width: 976px; height: 230px; border: 1px solid #dfe0e4; border-radius: 3px; background: #fff; }
.axis, .legend { font-family: "Liberation Sans", Arial, sans-serif; fill: #666; stroke: #666; stroke-width: .15px; }

/* debug bar */
.debugbar { position: absolute; left: 0; right: 0; bottom: 0; height: 91px; border-top: 1px solid #ddd; border-right: 1px solid #ddd; background: #f4f4f4; color: #555; font: 13px "DejaVu Sans", sans-serif; }
.db-tabs { display: flex; height: 30px; padding-left: 39px; color: #444; }
.db-tabs span { display: flex; align-items: center; justify-content: center; border-right: 1px solid #ddd; gap: 4px; }
.db-tabs em { height: 18px; min-width: 20px; border-radius: 9px; background: #f4645f; color: #fff; font-size: 12px; line-height: 18px; text-align: center; }
.d1, .d2, .d5, .d8 { width: 26px; }
.d3, .d7 { width: 25px; }
.d4 { width: 51px; padding-right: 2px; }
.d6 { width: 48px; padding-right: 2px; }
.d9 { width: 27px; }
.db-row { display: flex; justify-content: space-between; height: 30px; padding-left: 9px; }
.laravel { margin-top: 5px; }
.stats { display: flex; white-space: nowrap; }
.stats > span { display: flex; align-items: center; gap: 5px; padding: 0 5px; border-right: 1px solid #ddd; }
.stats > .s3 { gap: 6px; }
.picker { display: flex; height: 18px; margin: 3px 0 0 7px; background: #f2f1ef; line-height: 17px; font-size: 12.900px; }
.picker span { padding-left: 4px; width: 168px; }
.picker i { width: 28px; height: 18px; border: 1px solid #ddd; border-width: 1px 2px 2px 1px; border-right-color: #999; border-bottom-color: #999; margin-left: 4px; display: grid; place-items: center; }
.picker b { border: 3px solid transparent; border-top: 4px solid #000; border-bottom: 0; }
.p-folder { margin: 6px 0 0 10px; }
.p-up { margin: 8px 0 0 8px; }
.p-x { margin: 7px 5px 0 12px; }
.db-route { display: flex; height: 30px; align-items: center; justify-content: flex-end; gap: 4px; padding-right: 6px; color: #555; white-space: nowrap; }
.status { position: absolute; left: 0; bottom: 0; width: 190px; height: 24px; padding-left: 4px; border: 1px solid #c3c1be; border-width: 1px 1px 0 0; border-radius: 0 5px 0 0; background: #f3f2f0; color: #43423f; font: 16px/25px "Noto Sans", sans-serif; letter-spacing: .4px; white-space: nowrap; }
```
FILE: chart.js
```js
const NS = 'http://www.w3.org/2000/svg';
const chart = document.getElementById('chart');

function add(name, attrs, text) {
  const node = document.createElementNS(NS, name);
  for (const key in attrs) node.setAttribute(key, attrs[key]);
  if (text) node.textContent = text;
  chart.appendChild(node);
}

// Legend
[['Invoices', 679, '#337ab7', '#e9f0f8', 42],
 ['Payments', 775, '#36c157', '#e9f8ed', 50],
 ['Expenses', 879.5, '#808080', '#f2f2f2', 50]].forEach(([label, x, stroke, fill, w]) => {
  add('rect', { x: x + 1.75, y: 499, width: 38.5, height: 10, fill, stroke, 'stroke-width': 3.3 });
  add('text', { class: 'legend', x: 0, y: 0, 'font-size': 12, textLength: w, lengthAdjust: 'spacingAndGlyphs',
    transform: `translate(${x + 46} 507) scale(1 .86)` }, label);
});

// Horizontal grid and value axis
['$1.00', '$0.80', '$0.60', '$0.40', '$0.20', '$0.00'].forEach((label, i) => {
  const y = [517.5, 535.5, 554, 572, 590.5, 608][i];
  add('path', { d: `M405 ${y}H1300`, stroke: i < 2 ? '#e2e2e2' : '#ececec' });
  add('text', { class: 'axis', x: 375, y: y + 3, 'font-size': 11.5, textLength: 29, lengthAdjust: 'spacingAndGlyphs' }, label);
});
add('path', { d: 'M414.5 517v92', stroke: '#d4d4d4' });

// Daily series, all zero
add('path', { d: 'M414 608.3H1293', stroke: '#337ab7', 'stroke-width': 3 });
for (let i = 0; i < 30; i++) {
  const x = 414 + i * 30.3;
  const day = new Date(2021, 4, 20 + i);
  const label = `${day.getMonth() === 4 ? 'May' : 'Jun'} ${day.getDate()}, 2021`;
  add('ellipse', { cx: x, cy: 608.3, rx: 5, ry: 4.3, fill: '#337ab7' });
  add('text', { class: 'axis', 'text-anchor': 'end', 'font-size': 10.6, transform: `translate(${x + 1.5} 620.5) rotate(-44)` }, label);
}
```
